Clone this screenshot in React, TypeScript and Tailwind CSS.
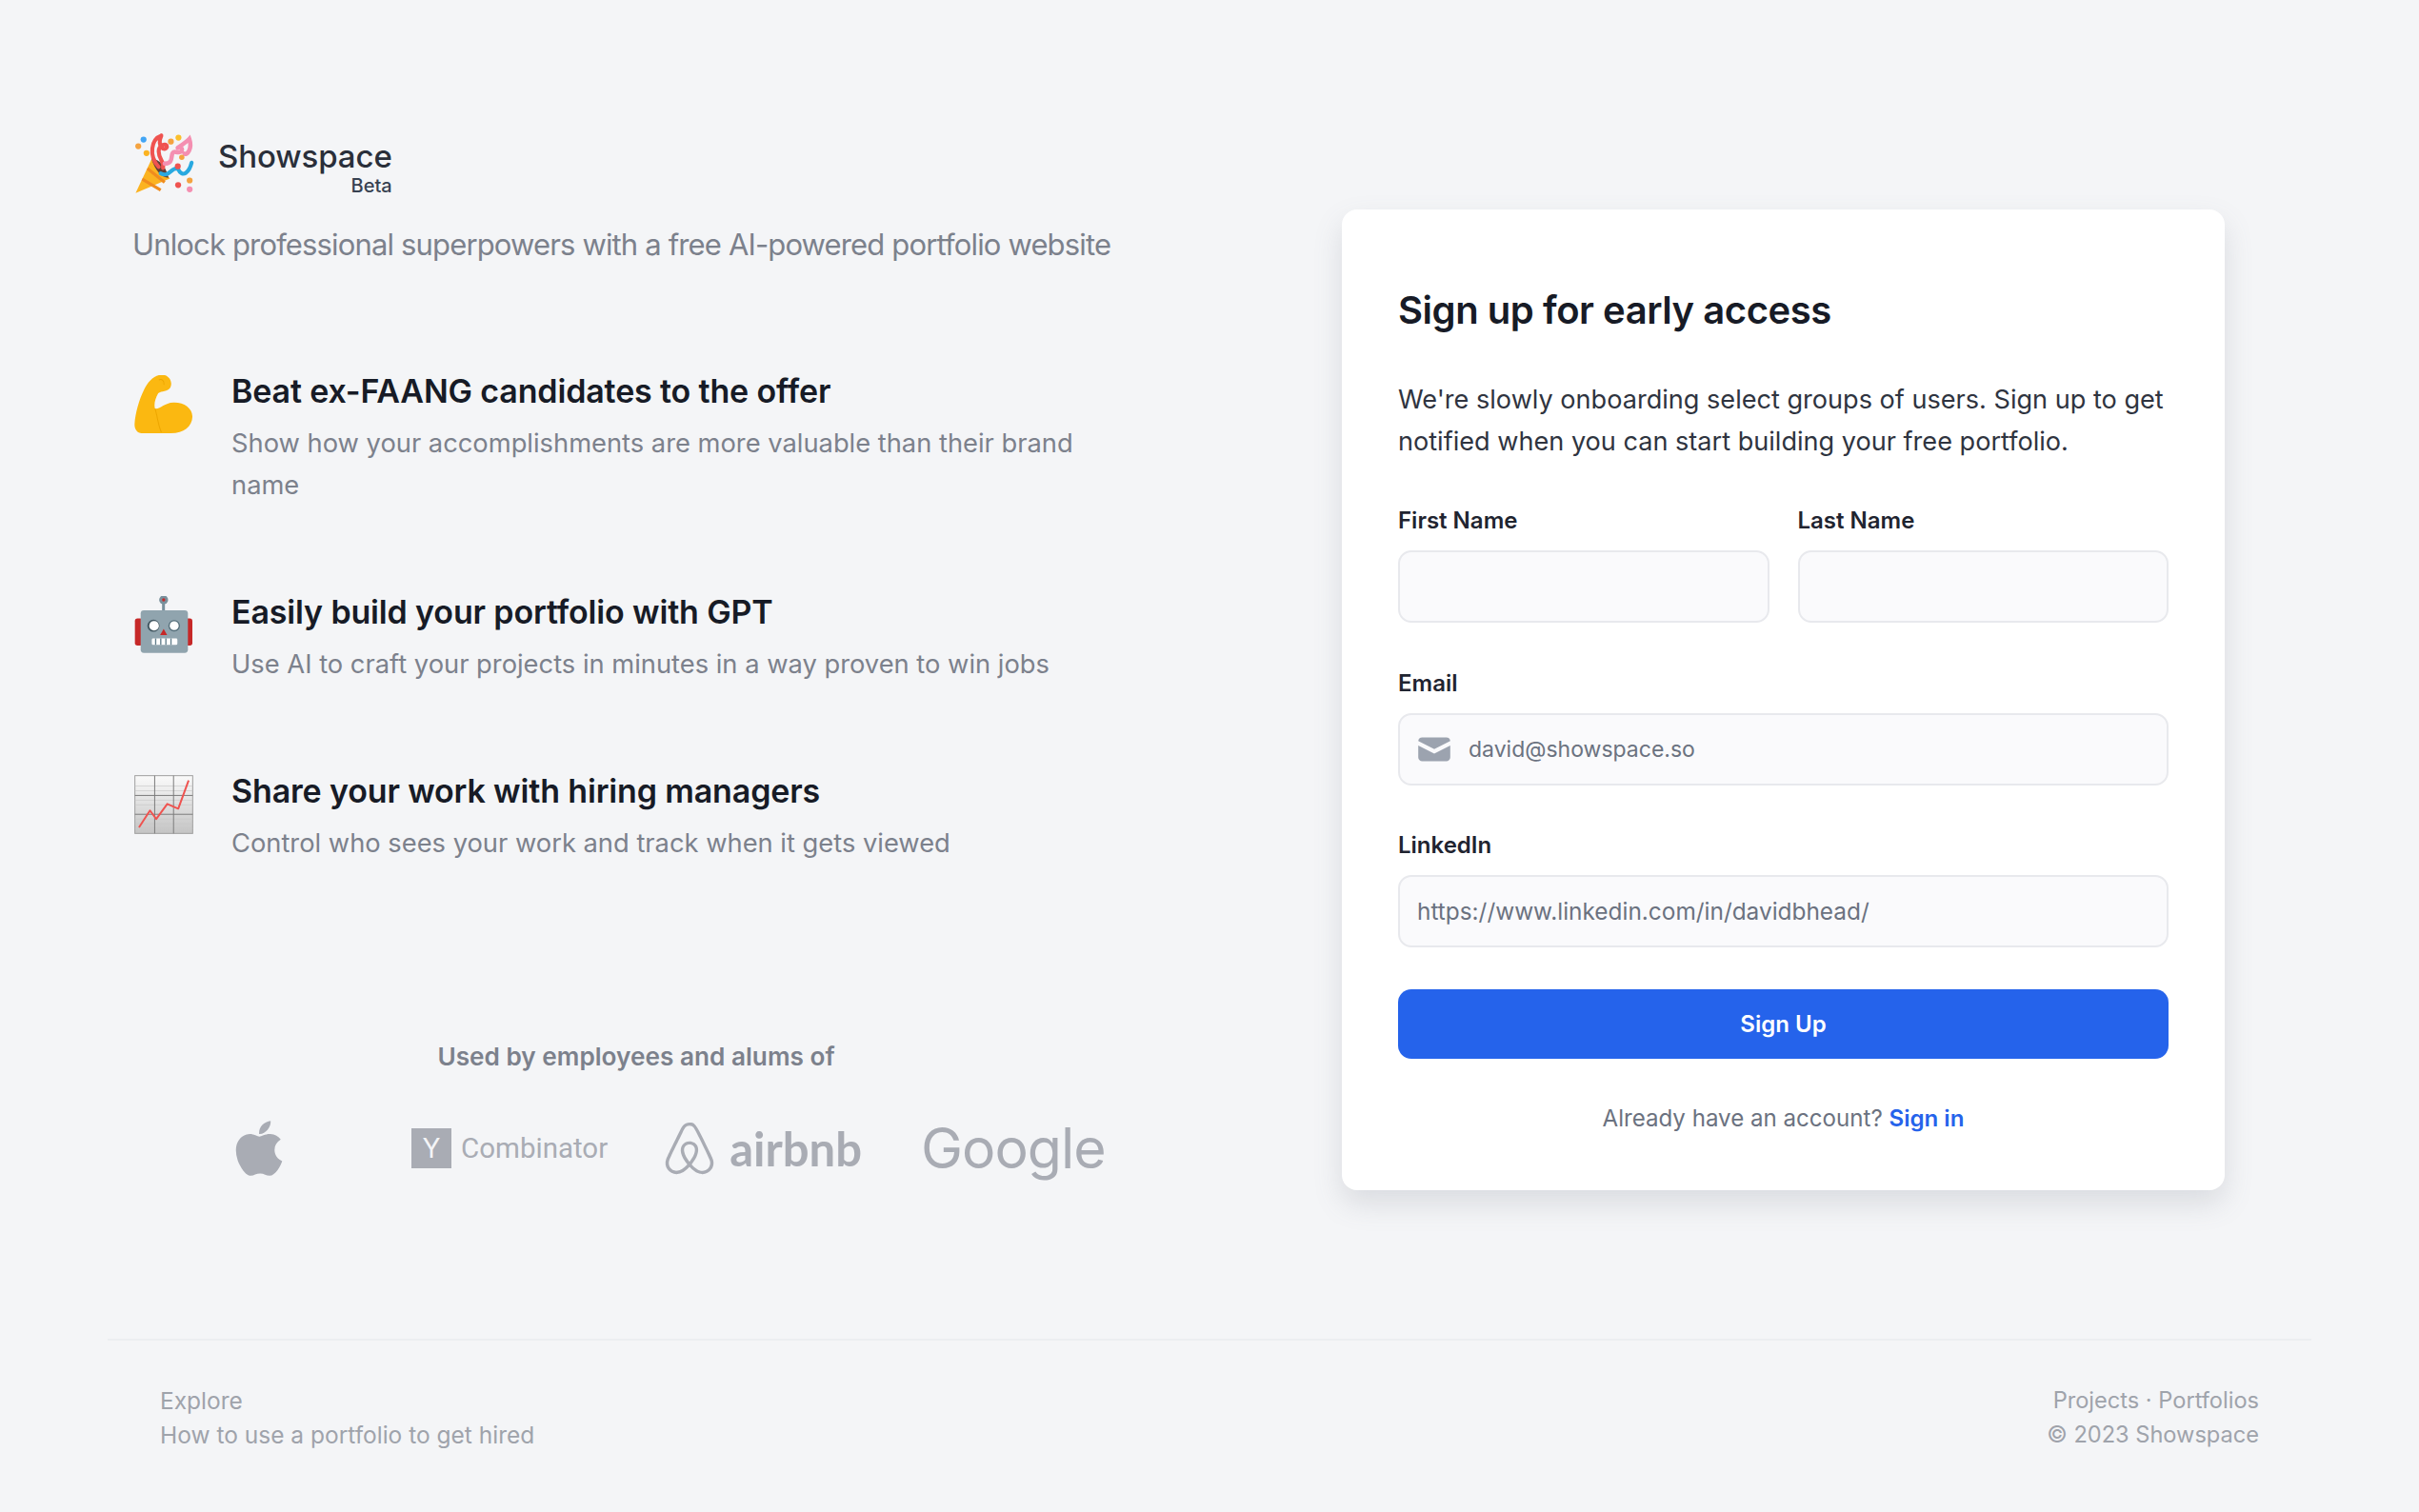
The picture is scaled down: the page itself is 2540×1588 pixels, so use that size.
import { FaAirbnb, FaApple } from "react-icons/fa";
import { HiMail } from "react-icons/hi";

const Popper = () => (
  <svg viewBox="35 30 185 185" className="w-[64px] h-[64px] shrink-0">
    <path d="M42 214 L93 106 L146 170 Z" fill="#fbb321" />
    <path d="M62 172 L118 205 M78 140 L130 182" stroke="#f08c1e" strokeWidth="9" fill="none" />
    <path d="M90 110 Q128 112 142 168 Q108 165 90 110Z" fill="#5d4037" />
    <path d="M112 135 C80 100 90 50 120 40 M120 40 C105 75 132 90 137 74 C137 60 112 68 112 88 C112 112 130 118 125 138" stroke="#ef5350" strokeWidth="12" fill="none" strokeLinecap="round" />
    <path d="M130 125 C165 125 140 85 165 90 C190 95 185 70 172 76 C160 82 195 62 205 50 C215 80 198 100 190 95" stroke="#f48fb1" strokeWidth="13" fill="none" strokeLinecap="round" />
    <path d="M118 155 C145 168 150 135 170 140 C185 172 205 150 212 122" stroke="#29a9e0" strokeWidth="12" fill="none" strokeLinecap="round" />
    <circle cx="66" cy="52" r="9" fill="#42a5f5" />
    <circle cx="50" cy="72" r="9" fill="#f4a340" />
    <circle cx="75" cy="93" r="9" fill="#fbb321" />
    <circle cx="149" cy="58" r="9" fill="#f4a340" />
    <circle cx="172" cy="46" r="9" fill="#fbc02d" />
    <circle cx="182" cy="106" r="8" fill="#f4a340" />
    <circle cx="170" cy="133" r="9" fill="#ef5350" />
    <circle cx="171" cy="190" r="9" fill="#ef5350" />
    <circle cx="206" cy="176" r="9" fill="#f4a340" />
    <circle cx="206" cy="203" r="9" fill="#f48fb1" />
  </svg>
);

const Muscle = () => (
  <svg viewBox="35 45 182 182" className="w-[61px] h-[61px] shrink-0">
    <path d="M36 198 C38 165 50 122 66 90 C78 64 100 42 125 44 C146 46 156 68 148 84 C140 98 120 94 110 102 C100 120 96 136 100 150 C118 152 128 132 158 131 C192 130 218 150 217 176 C216 206 190 226 150 227 L58 227 C44 227 35 214 36 198 Z" fill="#fbb811" />
    <path d="M100 150 C108 175 110 205 120 224" stroke="#eda600" strokeWidth="3" fill="none" />
    <path d="M112 60 C122 55 130 65 128 75" stroke="#eda600" strokeWidth="3" fill="none" />
  </svg>
);

const Robot = () => (
  <svg viewBox="35 745 182 182" className="w-[61px] h-[61px] shrink-0">
    <rect x="37" y="815" width="24" height="85" rx="8" fill="#c62828" />
    <rect x="192" y="815" width="25" height="85" rx="8" fill="#c62828" />
    <rect x="122" y="768" width="9" height="26" fill="#78909c" />
    <circle cx="127" cy="757" r="14" fill="#78909c" />
    <circle cx="127" cy="757" r="5" fill="#c62828" />
    <rect x="55" y="790" width="148" height="133" rx="10" fill="#90a4ae" />
    <circle cx="95" cy="838" r="19" fill="#455a64" />
    <circle cx="97" cy="838" r="15" fill="#fff" />
    <circle cx="160" cy="838" r="18" fill="#546e7a" />
    <circle cx="160" cy="838" r="14" fill="#fff" />
    <path d="M127 848 L138 867 L116 867 Z" fill="#c62828" />
    <rect x="90" y="878" width="80" height="20" rx="4" fill="#fff" />
    <path d="M102 878 V898 M118 878 V898 M134 878 V898 M150 878 V898" stroke="#607d8b" strokeWidth="4" />
  </svg>
);

const Chart = () => (
  <svg viewBox="35 1305 188 188" className="w-[62px] h-[62px] shrink-0">
    <defs>
      <linearGradient id="chartbg" x1="0" y1="0" x2="0" y2="1">
        <stop offset="0" stopColor="#fafafa" />
        <stop offset="1" stopColor="#c4c4c4" />
      </linearGradient>
    </defs>
    <rect x="37" y="1307" width="184" height="184" fill="url(#chartbg)" stroke="#9e9e9e" strokeWidth="3" />
    <path d="M37 1340 H221 M37 1355 H221 M37 1385 H221 M37 1400 H221 M37 1445 H221 M37 1460 H221 M37 1475 H221" stroke="#c8c8c8" strokeWidth="2" />
    <path d="M100 1307 V1491 M160 1307 V1491 M37 1370 H221 M37 1430 H221" stroke="#7b7b7b" strokeWidth="3" />
    <path d="M50 1472 L85 1418 L105 1445 L140 1397 L175 1412 L208 1322" stroke="#ef5350" strokeWidth="6" fill="none" strokeLinejoin="round" />
  </svg>
);

const features = [
  {
    icon: <Muscle />,
    title: "Beat ex-FAANG candidates to the offer",
    text: "Show how your accomplishments are more valuable than their brand name",
    height: "h-[232px]",
  },
  {
    icon: <Robot />,
    title: "Easily build your portfolio with GPT",
    text: "Use AI to craft your projects in minutes in a way proven to win jobs",
    height: "h-[188px]",
  },
  {
    icon: <Chart />,
    title: "Share your work with hiring managers",
    text: "Control who sees your work and track when it gets viewed",
    height: "h-[150px]",
  },
];

const inputCls =
  "w-full h-[76px] rounded-[14px] border-2 border-[#e8e9ed] bg-[#fafafc] text-[#6b7280] placeholder:text-[#6b7280] outline-none";

const Label = ({ children }: { children: string }) => (
  <label className="block mb-[15px] text-[24px] leading-[32px] font-semibold text-[#1f2430]">{children}</label>
);

export default function App() {
  return (
    <div className="w-full h-[1588px] bg-[#f4f5f7] flex flex-col font-['Inter',sans-serif] overflow-hidden">
      <div className="h-[1406px] flex shrink-0">
        <div className="w-[1040px] ml-[139px] pt-[139px] shrink-0">
          <div className="flex items-start gap-[25px] pl-[1px]">
            <Popper />
            <div className="flex flex-col items-end pt-[4px]">
              <span className="text-[33px] leading-[42px] font-medium tracking-[-0.1px] text-[#2a2f3a]">Showspace</span>
              <span className="text-[20px] leading-[24px] font-medium text-[#374151] -mt-[2px]">Beta</span>
            </div>
          </div>
          <p className="mt-[28px] text-[31px] leading-[44px] tracking-[-0.85px] text-[#7c818c] whitespace-nowrap">
            Unlock professional superpowers with a free AI-powered portfolio website
          </p>
          <div className="mt-[108px]">
            {features.map((f) => (
              <div key={f.title} className={`flex gap-[40px] ${f.height}`}>
                <div className="w-[64px] pl-[2px] pt-[7px] shrink-0">{f.icon}</div>
                <div className="w-[930px]">
                  <h3 className="text-[34px] leading-[48px] font-semibold tracking-[-0.15px] text-[#171b26]">{f.title}</h3>
                  <p className="mt-[9px] text-[27.3px] leading-[44px] text-[#7c818c]">{f.text}</p>
                </div>
              </div>
            ))}
          </div>
          <div className="mt-[135px] text-center pl-[18px]">
            <p className="text-[26.2px] leading-[36px] font-semibold text-[#7c818c]">Used by employees and alums of</p>
            <div className="mt-[43px] flex items-center h-[70px] text-[#a9acb4]">
              <FaApple className="w-[60px] h-[66px] ml-[85px]" />
              <div className="flex items-center ml-[130px]">
                <div className="w-[42px] h-[42px] bg-[#a9acb4] text-[#f4f5f7] flex items-center justify-center text-[28px]">Y</div>
                <span className="ml-[10px] text-[29.5px] font-['Roboto',sans-serif]">Combinator</span>
              </div>
              <div className="flex items-center ml-[58px]">
                <FaAirbnb className="w-[56px] h-[62px]" />
                <span className="ml-[14px] text-[49px] leading-[60px] font-bold font-['Lato',sans-serif]">airbnb</span>
              </div>
              <span className="ml-[62px] text-[59px] leading-[70px] tracking-[-1px] font-normal">Google</span>
            </div>
          </div>
        </div>
        <div className="w-[927px] h-[1030px] ml-[230px] mt-[220px] bg-white rounded-[16px] shadow-[0_14px_30px_rgba(100,105,120,0.18)] px-[59px] pt-[78px] shrink-0">
          <h1 className="text-[40px] leading-[56px] font-semibold tracking-[-0.45px] text-[#171b26]">Sign up for early access</h1>
          <p className="mt-[44px] text-[27.1px] leading-[44px] text-[#2f3440]">
            We're slowly onboarding select groups of users. Sign up to get notified when you can start building your free portfolio.
          </p>
          <div className="mt-[45px] grid grid-cols-2 gap-x-[30px]">
            <div>
              <Label>First Name</Label>
              <input className={inputCls} />
            </div>
            <div>
              <Label>Last Name</Label>
              <input className={inputCls} />
            </div>
          </div>
          <div className="mt-[48px]">
            <Label>Email</Label>
            <div className="relative">
              <HiMail className="absolute left-[17px] top-[17px] w-[42px] h-[42px] text-[#9ca3af]" />
              <input className={`${inputCls} pl-[72px] pr-[18px] text-[23px]`} placeholder="david@showspace.so" />
            </div>
          </div>
          <div className="mt-[47px]">
            <Label>LinkedIn</Label>
            <input className={`${inputCls} px-[18px] text-[24.4px]`} placeholder="https://www.linkedin.com/in/davidbhead/" />
          </div>
          <button className="mt-[44px] w-full h-[73px] rounded-[14px] bg-[#2563eb] text-white text-[24px] font-semibold">
            Sign Up
          </button>
          <p className="mt-[45px] text-center text-[24.1px] leading-[36px] text-[#6b7280]">
            Already have an account? <a className="font-semibold text-[#2563eb]">Sign in</a>
          </p>
        </div>
      </div>
      <div className="mx-[113px] border-t-2 border-[#eceef1] px-[55px] pt-[45px] flex justify-between text-[24.5px] leading-[36px] text-[#9fa3ab]">
        <div>
          <p>Explore</p>
          <p>How to use a portfolio to get hired</p>
        </div>
        <div className="text-right text-[23.6px]">
          <p>Projects · Portfolios</p>
          <p>© 2023 Showspace</p>
        </div>
      </div>
    </div>
  );
}
